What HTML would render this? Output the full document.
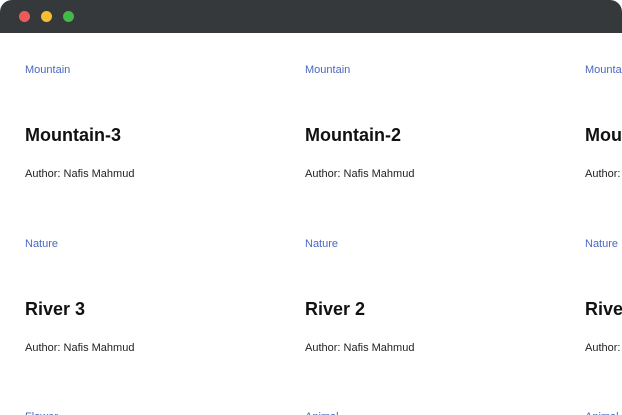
<!DOCTYPE html>
<html><head><meta charset="utf-8"><style>
html,body{margin:0;padding:0;background:#fff;font-family:"Liberation Sans",sans-serif;}
.wrap{position:relative;width:622px;height:415px;overflow:hidden;}
.bar{position:absolute;left:0;top:0;width:622px;height:33px;background:#35393b;border-radius:12px 12px 0 0;}
.dot{position:absolute;top:11px;width:11px;height:11px;border-radius:50%;}
.it{position:absolute;white-space:nowrap;}
.cat{font-size:11px;color:#4a68c0;}
.ti{font-size:18px;font-weight:bold;color:#111;}
.au{font-size:11px;color:#222;}
</style></head><body><div class="wrap">
<div class="bar">
<div class="dot" style="left:19px;background:#ee5a5a"></div>
<div class="dot" style="left:41px;background:#f8bd2e"></div>
<div class="dot" style="left:63px;background:#43b94a"></div>
</div>
<div class="it cat" style="left:25px;top:64px">Mountain</div>
<div class="it cat" style="left:305px;top:64px">Mountain</div>
<div class="it cat" style="left:585px;top:64px">Mountain</div>
<div class="it ti" style="left:25px;top:125px">Mountain-3</div>
<div class="it ti" style="left:305px;top:125px">Mountain-2</div>
<div class="it ti" style="left:585px;top:125px">Mountain-1</div>
<div class="it au" style="left:25px;top:168px">Author: Nafis Mahmud</div>
<div class="it au" style="left:305px;top:168px">Author: Nafis Mahmud</div>
<div class="it au" style="left:585px;top:168px">Author: Nafis Mahmud</div>
<div class="it cat" style="left:25px;top:238px">Nature</div>
<div class="it cat" style="left:305px;top:238px">Nature</div>
<div class="it cat" style="left:585px;top:238px">Nature</div>
<div class="it ti" style="left:25px;top:299px">River 3</div>
<div class="it ti" style="left:305px;top:299px">River 2</div>
<div class="it ti" style="left:585px;top:299px">River 1</div>
<div class="it au" style="left:25px;top:342px">Author: Nafis Mahmud</div>
<div class="it au" style="left:305px;top:342px">Author: Nafis Mahmud</div>
<div class="it au" style="left:585px;top:342px">Author: Nafis Mahmud</div>
<div class="it cat" style="left:25px;top:411px">Flower</div>
<div class="it cat" style="left:305px;top:411px">Animal</div>
<div class="it cat" style="left:585px;top:411px">Animal</div>
</div></body></html>
